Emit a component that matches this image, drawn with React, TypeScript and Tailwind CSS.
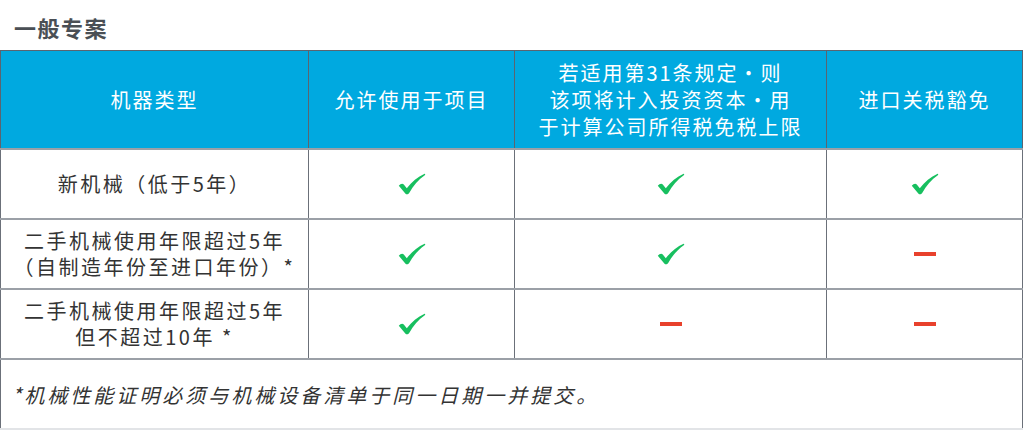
import React from 'react';

// 勾选与横线图标
const Check = () => (
  <svg width="28" height="22" viewBox="0 0 28 22" className="inline-block">
    <path
      d="M0.8 12.8 C2.5 10.6 4.6 10.2 5.8 11.6 L8.8 15.2 C13.8 8.8 19.5 4 26.6 0.8 C27.4 1 27.4 1.8 26.8 2.3 C20.5 6.8 15.2 12.6 11.2 20 C10.2 21.6 8.4 21.8 7.3 20.5 Z"
      fill="#17bf5f"
    />
  </svg>
);

const Dash = () => <span className="inline-block w-[22px] h-[4px] bg-[#e8412c]" />;

type Row = { label: string[]; cells: boolean[] };

const ROWS: Row[] = [
  { label: ['新机械（低于5年）'], cells: [true, true, true] },
  { label: ['二手机械使用年限超过5年', '（自制造年份至进口年份）*'], cells: [true, true, false] },
  { label: ['二手机械使用年限超过5年', '但不超过10年 *'], cells: [true, false, false] },
];

const font = { fontFamily: '"Noto Sans CJK SC", "Noto Sans", sans-serif' };

export default function App() {
  return (
    <div className="w-[1024px] h-[430px] bg-white overflow-hidden" style={font}>
      <h2 className="pl-[14px] pt-[12px] h-[50px] text-[22px] font-bold tracking-[1.5px] text-[#4a4f55] leading-[30px]">
        一般专案
      </h2>
      <table className="w-[1022px] table-fixed border-collapse">
        <colgroup>
          <col className="w-[308px]" />
          <col className="w-[206px]" />
          <col className="w-[312px]" />
          <col className="w-[196px]" />
        </colgroup>
        <thead>
          <tr className="h-[98px] bg-[#00a9e0] text-white text-[20px] tracking-[2px] leading-[27px]">
            <th className="font-normal border border-[#5b6470]">机器类型</th>
            <th className="font-normal border border-[#5b6470]">允许使用于项目</th>
            <th className="font-normal border border-[#5b6470]">
              若适用第31条规定·则
              <br />
              该项将计入投资资本·用
              <br />
              于计算公司所得税免税上限
            </th>
            <th className="font-normal border border-[#5b6470]">进口关税豁免</th>
          </tr>
        </thead>
        <tbody>
          {ROWS.map((r, i) => (
            <tr key={i} className="h-[70px] text-[20px] tracking-[2.5px] leading-[26px] text-[#333]">
              <td className="text-center border-x border-[#6b7079] border-y-2 border-y-[#9ba0a7]">
                {r.label.map((l) => (
                  <div key={l}>{l}</div>
                ))}
              </td>
              {r.cells.map((c, j) => (
                <td
                  key={j}
                  className="text-center border-x border-[#6b7079] border-y-2 border-y-[#9ba0a7]"
                >
                  <div className="flex justify-center items-center">{c ? <Check /> : <Dash />}</div>
                </td>
              ))}
            </tr>
          ))}
          <tr className="h-[70px]">
            <td
              colSpan={4}
              className="pl-[11px] pt-[2px] text-[20px] tracking-[3px] italic text-[#333] border-x border-[#6b7079] border-t-2 border-t-[#9ba0a7] border-b-2 border-b-[#e2e4e7]"
            >
              *机械性能证明必须与机械设备清单于同一日期一并提交。
            </td>
          </tr>
        </tbody>
      </table>
    </div>
  );
}
